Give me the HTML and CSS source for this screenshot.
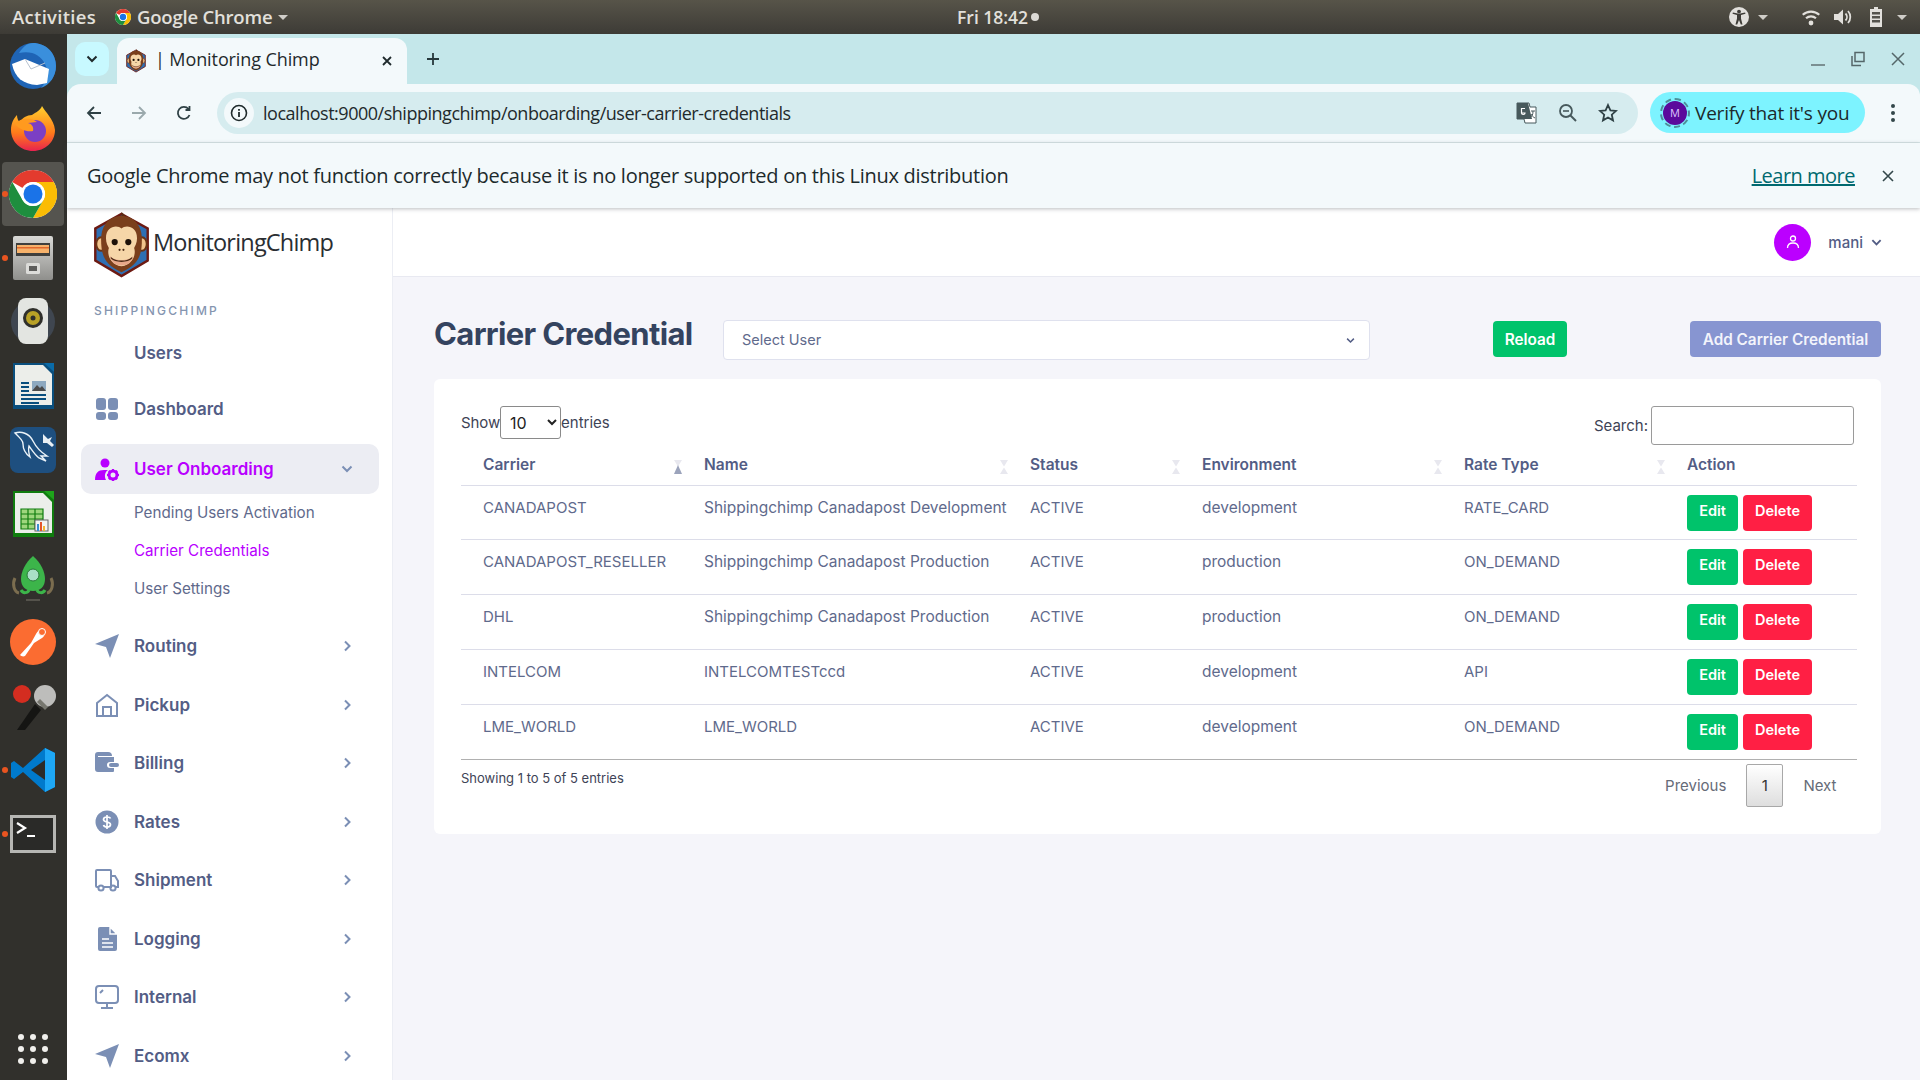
FILE: index.html
```html
<!DOCTYPE html>
<html lang="en">
<head>
<meta charset="utf-8">
<title>| Monitoring Chimp</title>
<link rel="stylesheet" href="styles.css">
</head>
<body>
<svg class="defs" width="0" height="0" aria-hidden="true">
  <defs>
    <symbol id="chrome" viewBox="0 0 48 48">
      <circle cx="24" cy="24" r="24" fill="#fff"/>
      <path d="M24 0a24 24 0 0 1 20.8 12H24a12 12 0 0 0-10.4 6L3.2 12A24 24 0 0 1 24 0z" fill="#e33b2e"/>
      <path d="M44.8 12A24 24 0 0 1 24 48l10.4-18A12 12 0 0 0 24 12z" fill="#fbbc04"/>
      <path d="M3.2 12l10.4 18A12 12 0 0 0 34.4 30L24 48A24 24 0 0 1 3.2 12z" fill="#1e8e3e"/>
      <circle cx="24" cy="24" r="12" fill="#fff"/>
      <circle cx="24" cy="24" r="9.5" fill="#1a73e8"/>
    </symbol>
    <symbol id="monkey" viewBox="0 0 58 68">
      <path d="M29 2 56 17V50L29 66 2 50V17z" fill="#2e6fb3" stroke="#6d1a12" stroke-width="2.5"/>
      <path d="M29 0c1 1 3 2 4 5l-4 2z" fill="#5a2c14"/>
      <ellipse cx="8" cy="33" rx="5" ry="7" fill="#f1c48c" stroke="#6a3415" stroke-width="2"/>
      <ellipse cx="50" cy="33" rx="5" ry="7" fill="#f1c48c" stroke="#6a3415" stroke-width="2"/>
      <path d="M29 4C16 4 8 14 8 28c0 14 2 26 21 34 19-8 21-20 21-34C50 14 42 4 29 4z" fill="#7a3f1c"/>
      <path d="M29 17c-4-4-16-3-16 10 0 5 2 8 3 10-2 5 0 17 13 19 13-2 15-14 13-19 1-2 3-5 3-10 0-13-12-14-16-10z" fill="#f6d6a8"/>
      <circle cx="22" cy="31" r="3.2" fill="#1c1008"/>
      <circle cx="36" cy="31" r="3.2" fill="#1c1008"/>
      <circle cx="27" cy="39" r="1.1" fill="#4a2a14"/>
      <circle cx="31" cy="39" r="1.1" fill="#4a2a14"/>
      <path d="M17 45c4 6 20 6 24 0-1 7-6 10-12 10s-11-3-12-10z" fill="#e8a88a"/>
      <path d="M18 47c5 5 17 5 22 0" fill="none" stroke="#4a2a14" stroke-width="1.4"/>
    </symbol>
    <symbol id="plane" viewBox="0 0 24 24"><path d="M24 0 15 24l-4-11L0 10z" fill="currentColor"/></symbol>
    <symbol id="chev-r" viewBox="0 0 12 12"><path d="M4 1.500 8.500 6 4 10.500" fill="none" stroke="currentColor" stroke-width="2"/></symbol>
    <symbol id="chev-d" viewBox="0 0 12 12"><path d="M1.500 3.500 6 8l4.500-4.500" fill="none" stroke="currentColor" stroke-width="2"/></symbol>
    <symbol id="sort" viewBox="0 0 8 14"><path d="M0 0h8L4 6.500z" fill="#e8e8ef"/><path d="M0 14h8L4 7.500z" fill="#e8e8ef"/></symbol>
    <symbol id="sort-asc" viewBox="0 0 8 14"><path d="M0 0h8L4 6.500z" fill="#e8e8ef"/><path d="M0 14h8L4 5z" fill="#9ba3bb"/></symbol>
  </defs>
</svg>

<div class="screen">
  <header class="gnome-bar">
    <span class="gnome-text gnome-activities">Activities</span>
    <span class="gnome-app">
      <svg class="gnome-chrome"><use href="#chrome"/></svg>
      <span class="gnome-text">Google Chrome</span>
      <span class="caret"></span>
    </span>
    <span class="gnome-clock">Fri 18:42 <i class="clock-dot"></i></span>
    <span class="gnome-tray">
      <svg class="tray-a11y" viewBox="0 0 20 20"><circle cx="10" cy="10" r="10" fill="#e2e0dc"/><circle cx="10" cy="4.600" r="1.900" fill="#3e3c37"/><path d="M3.500 6.800 8 8v3.500L6.500 17.500h1.700L10 13l1.800 4.500h1.700L12 11.500V8l4.500-1.200-.4-1.300L10 6.800 3.900 5.500z" fill="#3e3c37"/></svg>
      <span class="caret caret-a11y"></span>
      <svg class="tray-wifi" viewBox="0 0 20 20"><path d="M1 7a13 13 0 0 1 18 0l-1.500 1.600a11 11 0 0 0-15 0zM4.300 10.500a8.500 8.500 0 0 1 11.400 0l-1.500 1.600a6.300 6.300 0 0 0-8.400 0z" fill="#e2e0dc"/><circle cx="10" cy="16" r="2.400" fill="#e2e0dc"/></svg>
      <svg class="tray-vol" viewBox="0 0 20 20"><path d="M1 7h4l5-4.500v15L5 13H1z" fill="#e2e0dc"/><path d="M12.500 6.500a5 5 0 0 1 0 7M15 4a9 9 0 0 1 0 12" fill="none" stroke="#e2e0dc" stroke-width="1.800"/></svg>
      <svg class="tray-bat" viewBox="0 0 14 20"><path d="M5 0h4v2h4v18H1V2h4z" fill="#e2e0dc"/><path d="M3 5h8v2.500H3zM3 9h8v2.500H3zM3 13h8v2.500H3z" fill="#55534d"/></svg>
      <span class="caret caret-bat"></span>
    </span>
  </header>

  <aside class="dock">
    <div class="dock-item">
      <svg class="dock-icon" viewBox="0 0 48 48"><circle cx="24" cy="24" r="23" fill="#1f64b5"/><path d="M24 1c12 0 23 9 23 23 0 10-6 19-15 22 6-6 8-16 4-24C32 13 22 8 10 11 14 5 18 1 24 1z" fill="#3a8fdc"/><path d="M3 22 16 17l24 10-2 14-10 2C14 42 6 36 3 22z" fill="#fff"/><path d="M16 17l6 10 14-6" fill="none" stroke="#b7c2cf" stroke-width="1"/></svg>
    </div>
    <div class="dock-item">
      <svg class="dock-icon" viewBox="0 0 48 48"><defs><linearGradient id="ff" x1="0" y1="0" x2="0" y2="1"><stop offset="0" stop-color="#ffd02e"/><stop offset=".6" stop-color="#ff7a1a"/><stop offset="1" stop-color="#e8224f"/></linearGradient></defs><path d="M33 0c3 6 12 13 13 24 0 12-10 21-22 21S2 36 2 24c0-7 3-12 6-15 0 3 1 6 3 7 2-4 7-7 12-7 4-3 8-4 10-9z" fill="url(#ff)"/><circle cx="26" cy="25" r="11" fill="#7b3fc4"/><path d="M6 18c5-6 16-7 22-2l-9 1c4 1 6 4 5 8-6 1-13-1-18-7z" fill="#ff9a1f"/></svg>
    </div>
    <div class="dock-item dock-active">
      <i class="run-dot"></i>
      <svg class="dock-icon"><use href="#chrome"/></svg>
    </div>
    <div class="dock-item">
      <i class="run-dot"></i>
      <svg class="dock-icon" viewBox="0 0 48 48"><defs><linearGradient id="cab" x1="0" y1="0" x2="0" y2="1"><stop offset="0" stop-color="#d9d9d6"/><stop offset="1" stop-color="#8f8f8c"/></linearGradient></defs><rect x="4" y="2" width="40" height="44" rx="2" fill="url(#cab)"/><rect x="7" y="9" width="34" height="13" fill="#3f3f3d"/><rect x="8" y="11" width="32" height="8" fill="#f6b26b"/><path d="M8 13h32v1.500H8z" fill="#e2692c"/><rect x="17" y="29" width="14" height="11" rx="1.500" fill="#dcdcd9"/><rect x="20" y="32" width="8" height="5" fill="#5d5d5b"/></svg>
    </div>
    <div class="dock-item">
      <svg class="dock-icon" viewBox="0 0 48 48"><circle cx="24" cy="24" r="22" fill="#3f4650"/><rect x="9" y="0" width="30" height="46" rx="8" fill="#e3e5e1"/><circle cx="24" cy="20" r="10" fill="#2f2f2b"/><circle cx="24" cy="20" r="7" fill="#b8a126"/><circle cx="24" cy="20" r="2.500" fill="#2f2f2b"/></svg>
    </div>
    <div class="dock-item">
      <svg class="dock-icon" viewBox="0 0 48 48"><path d="M4 1h32l9 9v37H4z" fill="#0a4f7e"/><path d="M6 3h28l9 9v31H6z" fill="#eceeea"/><path d="M35 1l10 9V1z" fill="#0a6ba8"/><path d="M12 20h8v2h-8zM12 24h8v2h-8zM12 28h8v2h-8zM12 32h25v2H12zM12 36h25v2H12zM12 40h18v2H12z" fill="#0a4f7e"/><rect x="23" y="19" width="14" height="10" fill="#8da9c0"/><path d="M23 29l5-6 3 3 2-2 4 5z" fill="#4b4b4b"/></svg>
    </div>
    <div class="dock-item">
      <svg class="dock-icon" viewBox="0 0 48 48"><rect x="1" y="1" width="46" height="46" rx="8" fill="#1e4f7f"/><path d="M6 7c6-2 14 0 18 8 3 6 6 10 14 15l-6 0 5 5-7-3c-4-3-7-8-10-12-1 4 0 8 1 11-4-3-7-8-7-13 0-3-2-5-8-11z" fill="none" stroke="#eaf2f8" stroke-width="1.400"/><path d="M34 8l5 5 4-2-2 4 4 4-2 2-5-4-4 0z" fill="#e9eff4"/></svg>
    </div>
    <div class="dock-item">
      <svg class="dock-icon" viewBox="0 0 48 48"><path d="M4 1h32l9 9v37H4z" fill="#107c0e"/><path d="M6 3h28l9 9v31H6z" fill="#eceeea"/><path d="M35 1l10 9V1z" fill="#1ea51b"/><path d="M12 19h22v20H12z" fill="#9ed67d"/><path d="M12 19h22v20H12zM12 24h22M12 29h22M12 34h22M19 19v20M26 19v20" fill="none" stroke="#107c0e" stroke-width="1.200"/><rect x="26" y="30" width="13" height="11" fill="#f4f4f2" stroke="#666"/><path d="M28 34h2v7h-2z" fill="#3b8ed0"/><path d="M31 32h2v9h-2z" fill="#e2552a"/><path d="M34 36h2v5h-2z" fill="#f2b632"/></svg>
    </div>
    <div class="dock-item">
      <svg class="dock-icon" viewBox="0 0 48 48"><path d="M6 24c-3 6-1 14 4 15M42 24c3 6 1 14-4 15" fill="none" stroke="#7b6d4f" stroke-width="3"/><path d="M24 2c8 7 12 16 12 23 0 8-5 12-12 12S12 33 12 25c0-7 4-16 12-23z" fill="#3cb54a"/><circle cx="24" cy="21" r="6" fill="#a9e0c6" stroke="#2a7a3a"/><path d="M12 36c2 4 7 3 8 0M36 36c-2 4-7 3-8 0" fill="none" stroke="#3cb54a" stroke-width="3"/><path d="M17 46h14" stroke="#55534c" stroke-width="2"/></svg>
    </div>
    <div class="dock-item">
      <svg class="dock-icon" viewBox="0 0 48 48"><circle cx="24" cy="24" r="23" fill="#fb6c31"/><path d="M11 37 22 25l5-9c2-4 6-6 8-4s1 6-2 8l-8 5-9 13c-2 1-4 0-5-1z" fill="#fff"/><circle cx="33" cy="14" r="3.500" fill="#fb6c31" stroke="#fff"/></svg>
    </div>
    <div class="dock-item">
      <svg class="dock-icon" viewBox="0 0 48 48"><path d="M26 22 8 48h8l16-20z" fill="#151513"/><circle cx="36" cy="14" r="11" fill="#bdbdbb"/><path d="M28 20l8 8 3-3-8-8z" fill="#77776f"/><circle cx="13" cy="12" r="9" fill="#d42d20"/></svg>
    </div>
    <div class="dock-item">
      <i class="run-dot"></i>
      <svg class="dock-icon" viewBox="0 0 48 48"><path d="M36 2 46 7v34L36 46 14 26 5 33 2 31V17l3-2 9 7z" fill="#007acc"/><path d="M36 2 46 7v34L36 46z" fill="#1ea7f5"/><path d="M36 14v20L22 24z" fill="#2c2b27"/></svg>
    </div>
    <div class="dock-item">
      <i class="run-dot"></i>
      <svg class="dock-icon" viewBox="0 0 48 48"><rect x="1" y="5" width="46" height="38" fill="#b6b6b3"/><rect x="4" y="8" width="40" height="32" fill="#2a2a28"/><path d="M8 13l8 5-8 5" fill="none" stroke="#fff" stroke-width="2.200"/><path d="M18 25h8v2h-8z" fill="#fff"/></svg>
    </div>
    <div class="dock-grid">
      <i></i><i></i><i></i><i></i><i></i><i></i><i></i><i></i><i></i>
    </div>
  </aside>

  <div class="browser">
    <div class="tabstrip">
      <span class="tab-search">
        <svg class="ico12"><use href="#chev-d"/></svg>
      </span>
      <div class="tab">
        <svg class="tab-fav"><use href="#monkey"/></svg>
        <span class="tab-title">| Monitoring Chimp</span>
        <svg class="tab-close" viewBox="0 0 12 12"><path d="M2 2l8 8M10 2l-8 8" stroke="#1f2a2c" stroke-width="1.800"/></svg>
      </div>
      <svg class="tab-new" viewBox="0 0 14 14"><path d="M7 1v12M1 7h12" stroke="#27393c" stroke-width="1.800"/></svg>
      <span class="win-controls">
        <svg class="win-ico" viewBox="0 0 16 16"><path d="M1 14h14" stroke="#6a7a7c" stroke-width="1.600"/></svg>
        <svg class="win-ico" viewBox="0 0 16 16"><path d="M5 1.500h9v9H5zM2 5v9.500h9" fill="none" stroke="#55676a" stroke-width="1.500"/></svg>
        <svg class="win-ico" viewBox="0 0 16 16"><path d="M2 2l12 12M14 2 2 14" stroke="#55676a" stroke-width="1.500"/></svg>
      </span>
    </div>

    <div class="toolbar">
      <svg class="nav-ico" viewBox="0 0 18 18"><path d="M16 9H3M9 3 3 9l6 6" fill="none" stroke="#2f4145" stroke-width="1.800"/></svg>
      <svg class="nav-ico" viewBox="0 0 18 18"><path d="M2 9h13M9 3l6 6-6 6" fill="none" stroke="#9aa9ac" stroke-width="1.800"/></svg>
      <svg class="nav-ico" viewBox="0 0 18 18"><path d="M14.500 11a6 6 0 1 1-1-6M14.500 2v4h-4" fill="none" stroke="#2f4145" stroke-width="1.800"/></svg>
      <div class="omnibox">
        <span class="omni-info">
          <svg class="omni-i" viewBox="0 0 18 18"><circle cx="9" cy="9" r="7.500" fill="none" stroke="#1f2a2c" stroke-width="1.600"/><path d="M9 8v5M9 5v1.800" stroke="#1f2a2c" stroke-width="1.800"/></svg>
        </span>
        <span class="omni-url">localhost:9000/shippingchimp/onboarding/user-carrier-credentials</span>
        <svg class="omni-translate" viewBox="0 0 22 22"><path d="M1 1h12l1 4h6v16H9l-1-4H1z" fill="#fff" stroke="#47595c" stroke-width="1"/><path d="M1 1h11l4 16H1z" fill="#47595c"/><path d="M9 6.500H5.500v4.500H9c0 2-3.500 2-3.500 0" fill="none" stroke="#fff" stroke-width="1.200"/><path d="M15 9h4M17 9c0 4-1 5-3 7M15 12c1 2 2 3 4 4" fill="none" stroke="#47595c" stroke-width="1"/></svg>
        <svg class="omni-ico" viewBox="0 0 20 20"><circle cx="8" cy="8" r="6" fill="none" stroke="#47595c" stroke-width="1.800"/><path d="M5 8h6" stroke="#47595c" stroke-width="1.600"/><path d="M12.500 12.500 18 18" stroke="#47595c" stroke-width="2"/></svg>
        <svg class="omni-ico" viewBox="0 0 20 20"><path d="M10 2l2.400 5.300 5.600.6-4.200 3.800 1.200 5.700-5-2.900-5 2.900 1.200-5.700L2 7.900l5.600-.6z" fill="none" stroke="#2f4145" stroke-width="1.800"/></svg>
      </div>
      <div class="verify">
        <span class="verify-avatar"><span class="verify-m">M</span></span>
        <span class="verify-text">Verify that it's you</span>
      </div>
      <svg class="menu-dots" viewBox="0 0 6 20"><circle cx="3" cy="3" r="2" fill="#33474a"/><circle cx="3" cy="10" r="2" fill="#33474a"/><circle cx="3" cy="17" r="2" fill="#33474a"/></svg>
    </div>

    <div class="infobar">
      <span class="info-msg">Google Chrome may not function correctly because it is no longer supported on this Linux distribution</span>
      <a class="info-link">Learn more</a>
      <svg class="info-close" viewBox="0 0 14 14"><path d="M2 2l10 10M12 2 2 12" stroke="#33474a" stroke-width="1.600"/></svg>
    </div>

    <div class="app">
      <nav class="sidebar">
        <div class="brand">
          <svg class="brand-logo"><use href="#monkey"/></svg>
          <span class="brand-name">MonitoringChimp</span>
        </div>
        <div class="nav-label">SHIPPINGCHIMP</div>
        <div class="nav-item nav-users"><span class="nav-icon"></span><span class="nav-text">Users</span></div>
        <div class="nav-item nav-dash">
          <span class="nav-icon"><svg class="ico24" viewBox="0 0 24 24"><rect x="1" y="1" width="10" height="12" rx="3" fill="currentColor"/><rect x="13" y="1" width="10" height="12" rx="3" fill="currentColor"/><rect x="1" y="15" width="10" height="8" rx="3" fill="currentColor"/><rect x="13" y="15" width="10" height="8" rx="3" fill="currentColor"/></svg></span>
          <span class="nav-text">Dashboard</span>
        </div>
        <div class="nav-item nav-open">
          <span class="nav-icon"><svg class="ico24" viewBox="0 0 24 24"><circle cx="10" cy="6" r="4.500" fill="currentColor"/><path d="M0 23c0-7 3-10 9-10h4c-3 2-4 6-2 10z" fill="currentColor"/><circle cx="18" cy="18" r="4" fill="none" stroke="currentColor" stroke-width="3"/><path d="M18 12v2.500M18 21.500V24M12 18h2.500M21.500 18H24M13.800 13.800l1.700 1.700M20.500 20.500l1.700 1.700M13.800 22.200l1.700-1.700M20.500 15.500l1.700-1.700" stroke="currentColor" stroke-width="2"/></svg></span>
          <span class="nav-text">User Onboarding</span>
          <svg class="nav-chev"><use href="#chev-d"/></svg>
        </div>
        <div class="subnav">
          <div class="sub-item">Pending Users Activation</div>
          <div class="sub-item sub-active">Carrier Credentials</div>
          <div class="sub-item">User Settings</div>
        </div>
        <div class="nav-item">
          <span class="nav-icon"><svg class="ico24"><use href="#plane"/></svg></span>
          <span class="nav-text">Routing</span>
          <svg class="nav-chev"><use href="#chev-r"/></svg>
        </div>
        <div class="nav-item">
          <span class="nav-icon"><svg class="ico24" viewBox="0 0 24 24"><path d="M2 10 12 2l10 8v13H2z" fill="none" stroke="currentColor" stroke-width="2"/><path d="M8 23V14h8v9" fill="none" stroke="currentColor" stroke-width="2"/></svg></span>
          <span class="nav-text">Pickup</span>
          <svg class="nav-chev"><use href="#chev-r"/></svg>
        </div>
        <div class="nav-item">
          <span class="nav-icon"><svg class="ico24" viewBox="0 0 24 24"><path d="M0 4a3 3 0 0 1 3-3h10a4 4 0 0 1 4 4H3v1h16v5h-4a3 3 0 0 0 0 6h4v3a1 1 0 0 1-1 1H3a3 3 0 0 1-3-3z" fill="currentColor"/><rect x="14" y="12" width="10" height="4" rx="2" fill="currentColor"/></svg></span>
          <span class="nav-text">Billing</span>
          <svg class="nav-chev"><use href="#chev-r"/></svg>
        </div>
        <div class="nav-item">
          <span class="nav-icon"><svg class="ico24" viewBox="0 0 24 24"><circle cx="12" cy="12" r="11.500" fill="currentColor"/><path d="M15.500 8.500C15 7 13.500 7 12 7c-2 0-3.500 1-3.500 2.500 0 3.500 7 1.500 7 5 0 1.500-1.500 2.500-3.500 2.500-1.500 0-3-.5-3.500-2M12 5v14" fill="none" stroke="#fff" stroke-width="1.700"/></svg></span>
          <span class="nav-text">Rates</span>
          <svg class="nav-chev"><use href="#chev-r"/></svg>
        </div>
        <div class="nav-item">
          <span class="nav-icon"><svg class="ico24" viewBox="0 0 24 24"><path d="M3 19H2a1 1 0 0 1-1-1V3a1 1 0 0 1 1-1h13a1 1 0 0 1 1 1v16H9M16 8h4l3 5v6h-3" fill="none" stroke="currentColor" stroke-width="2"/><circle cx="6" cy="20" r="2.600" fill="none" stroke="currentColor" stroke-width="2"/><circle cx="18" cy="20" r="2.600" fill="none" stroke="currentColor" stroke-width="2"/></svg></span>
          <span class="nav-text">Shipment</span>
          <svg class="nav-chev"><use href="#chev-r"/></svg>
        </div>
        <div class="nav-item">
          <span class="nav-icon"><svg class="ico24" viewBox="0 0 24 24"><path d="M5 0h10l7 7v15a2 2 0 0 1-2 2H5a2 2 0 0 1-2-2V2a2 2 0 0 1 2-2z" fill="currentColor"/><path d="M15 0v7h7zM7 12h7M7 16h11M7 20h11" fill="none" stroke="#fff" stroke-width="1.400"/></svg></span>
          <span class="nav-text">Logging</span>
          <svg class="nav-chev"><use href="#chev-r"/></svg>
        </div>
        <div class="nav-item">
          <span class="nav-icon"><svg class="ico24" viewBox="0 0 24 24"><rect x="1" y="1" width="22" height="17" rx="3" fill="none" stroke="currentColor" stroke-width="2"/><path d="M12 18v5M6 23h12M5 8l3-3" fill="none" stroke="currentColor" stroke-width="2"/></svg></span>
          <span class="nav-text">Internal</span>
          <svg class="nav-chev"><use href="#chev-r"/></svg>
        </div>
        <div class="nav-item">
          <span class="nav-icon"><svg class="ico24"><use href="#plane"/></svg></span>
          <span class="nav-text">Ecomx</span>
          <svg class="nav-chev"><use href="#chev-r"/></svg>
        </div>
      </nav>

      <div class="page">
        <div class="page-head">
          <span class="avatar">
            <svg class="avatar-ico" viewBox="0 0 14 14"><circle cx="7" cy="3.500" r="2.500" fill="none" stroke="#fff" stroke-width="1.300"/><path d="M1.500 13c0-3 2-5 5.500-5s5.500 2 5.500 5" fill="none" stroke="#fff" stroke-width="1.300"/></svg>
          </span>
          <span class="user-name">mani</span>
          <svg class="user-chev"><use href="#chev-d"/></svg>
        </div>

        <main class="content">
          <div class="title-row">
            <h1 class="title">Carrier Credential</h1>
            <div class="user-select">
              <span class="user-select-text">Select User</span>
              <svg class="select-chev"><use href="#chev-d"/></svg>
            </div>
            <button class="btn btn-reload">Reload</button>
            <button class="btn btn-add">Add Carrier Credential</button>
          </div>

          <section class="card">
            <div class="dt-top">
              <label class="dt-length"><span class="dt-show">Show</span><select class="dt-select"><option>10</option></select>entries</label>
              <label class="dt-search">Search:<input class="dt-input" type="text"></label>
            </div>
            <table class="dt">
              <colgroup>
                <col class="c1"><col class="c2"><col class="c3"><col class="c4"><col class="c5"><col class="c6">
              </colgroup>
              <thead>
                <tr>
                  <th>Carrier<svg class="sort-ico"><use href="#sort-asc"/></svg></th>
                  <th>Name<svg class="sort-ico"><use href="#sort"/></svg></th>
                  <th>Status<svg class="sort-ico"><use href="#sort"/></svg></th>
                  <th>Environment<svg class="sort-ico"><use href="#sort"/></svg></th>
                  <th>Rate Type<svg class="sort-ico"><use href="#sort"/></svg></th>
                  <th>Action</th>
                </tr>
              </thead>
              <tbody>
                <tr>
                  <td>CANADAPOST</td><td class="lc">Shippingchimp Canadapost Development</td><td>ACTIVE</td><td class="lc">development</td><td>RATE_CARD</td>
                  <td class="td-act"><button class="btn btn-edit">Edit</button><button class="btn btn-del">Delete</button></td>
                </tr>
                <tr>
                  <td>CANADAPOST_RESELLER</td><td class="lc">Shippingchimp Canadapost Production</td><td>ACTIVE</td><td class="lc">production</td><td>ON_DEMAND</td>
                  <td class="td-act"><button class="btn btn-edit">Edit</button><button class="btn btn-del">Delete</button></td>
                </tr>
                <tr>
                  <td>DHL</td><td class="lc">Shippingchimp Canadapost Production</td><td>ACTIVE</td><td class="lc">production</td><td>ON_DEMAND</td>
                  <td class="td-act"><button class="btn btn-edit">Edit</button><button class="btn btn-del">Delete</button></td>
                </tr>
                <tr>
                  <td>INTELCOM</td><td>INTELCOMTESTccd</td><td>ACTIVE</td><td class="lc">development</td><td>API</td>
                  <td class="td-act"><button class="btn btn-edit">Edit</button><button class="btn btn-del">Delete</button></td>
                </tr>
                <tr>
                  <td>LME_WORLD</td><td>LME_WORLD</td><td>ACTIVE</td><td class="lc">development</td><td>ON_DEMAND</td>
                  <td class="td-act"><button class="btn btn-edit">Edit</button><button class="btn btn-del">Delete</button></td>
                </tr>
              </tbody>
            </table>
            <div class="dt-bottom">
              <span class="dt-info">Showing 1 to 5 of 5 entries</span>
              <div class="pager">
                <span class="pager-link">Previous</span>
                <span class="pager-cur">1</span>
                <span class="pager-link">Next</span>
              </div>
            </div>
          </section>
        </main>
      </div>
    </div>
  </div>
</div>
</body>
</html>
```

FILE: styles.css
```css
* { box-sizing: border-box; }
html, body { margin: 0; height: 100%; overflow: hidden; }
body { font-family: "Inter", "Noto Sans", sans-serif; background: #2f2e2a; }
.defs { position: absolute; }

.screen {
  height: 1080px;
  display: grid;
  grid-template-columns: 67px 1fr;
  grid-template-rows: 34px 1fr;
}

/* GNOME bar */
.gnome-bar {
  grid-column: 1 / -1;
  display: flex;
  align-items: center;
  padding-left: 12px;
  background: linear-gradient(#575449, #3d3b36);
  color: #e2e0db;
}
.gnome-text { font: 600 18.500px/34px "Open Sans", sans-serif; letter-spacing: -.2px; }
.gnome-activities { width: 103px; letter-spacing: .3px; }
.gnome-app { display: flex; align-items: center; }
.gnome-chrome { width: 16px; height: 16px; margin-right: 6px; }
.caret { width: 0; height: 0; border: 5px solid transparent; border-top: 5px solid #cfcdc8; border-bottom: 0; margin-left: 6px; }
.gnome-clock { position: absolute; left: 957px; font: 600 17.500px/34px "Open Sans", sans-serif; display: flex; align-items: center; gap: 3px; }
.clock-dot { width: 8px; height: 8px; border-radius: 50%; background: #dcdad5; }
.gnome-tray { margin-left: auto; display: flex; align-items: center; padding-right: 13px; }
.tray-a11y { width: 20px; height: 20px; }
.caret-a11y { margin-left: 9px; }
.tray-wifi { width: 20px; height: 20px; margin-left: 33px; }
.tray-vol { width: 20px; height: 20px; margin-left: 12px; }
.tray-bat { width: 16px; height: 20px; margin-left: 15px; }
.caret-bat { margin-left: 13px; }

/* Dock */
.dock { background: #31302c; display: flex; flex-direction: column; overflow: hidden; }
.dock-item { height: 64px; display: flex; align-items: center; justify-content: center; position: relative; flex: none; padding-right: 1px; }
.dock-icon { width: 48px; height: 48px; }
.dock-active::before { content: ""; position: absolute; left: 2px; right: 3px; top: 0; bottom: 0; background: #55544f; border-radius: 4px; }
.dock-active .dock-icon { position: relative; }
.run-dot { position: absolute; left: 2px; top: 29px; width: 6px; height: 6px; border-radius: 50%; background: #e95420; z-index: 1; }
.dock-grid {
  margin: auto 0 16px 18px;
  display: grid;
  grid-template-columns: repeat(3, 6px);
  gap: 6px;
}
.dock-grid i { width: 6px; height: 6px; border-radius: 50%; background: #f0efec; }

/* Browser */
.browser { display: flex; flex-direction: column; min-width: 0; height: 1046px; background: #c4e7ea; }
.tabstrip { height: 50px; display: flex; align-items: flex-start; flex: none; padding-left: 8px; }
.tab-search { width: 34px; height: 34px; margin-top: 8px; background: #c8f9ff; border-radius: 10px; display: flex; align-items: center; justify-content: center; color: #1f2a2c; }
.ico12 { width: 12px; height: 12px; }
.tab {
  width: 290px;
  height: 46px;
  margin: 4px 0 0 8px;
  padding: 0 14px 0 9px;
  background: #f3f9fb;
  border-radius: 12px 12px 0 0;
  display: flex;
  align-items: center;
}
.tab-fav { width: 20px; height: 24px; }
.tab-title { margin: 0 0 5px 9px; font: 400 18px "Open Sans", sans-serif; color: #1f2a2c; letter-spacing: -.1px; flex: 1; white-space: nowrap; }
.tab-close { width: 12px; height: 12px; }
.tab-new { width: 14px; height: 14px; margin: 18px 0 0 19px; }
.win-controls { margin-left: auto; display: flex; gap: 24px; padding: 17px 14px 0 0; }
.win-ico { width: 16px; height: 16px; }

.toolbar {
  height: 59px;
  flex: none;
  background: #f3f9fb;
  border-top-left-radius: 14px;
  border-top-right-radius: 12px;
  border-bottom: 1px solid #d8e6e8;
  display: flex;
  align-items: center;
  padding-left: 18px;
}
.nav-ico { width: 18px; height: 18px; margin-right: 27px; }
.nav-ico:nth-child(3) { margin-right: 24px; }
.omnibox {
  width: 1421px;
  height: 42px;
  margin-top: -1px;
  background: #d6ecef;
  border-radius: 21px;
  display: flex;
  align-items: center;
  padding: 0 15px 0 7px;
}
.omni-info { width: 30px; height: 30px; border-radius: 50%; background: #f3f9fb; display: flex; align-items: center; justify-content: center; }
.omni-i { width: 18px; height: 18px; }
.omni-url { margin-left: 9px; font: 400 18px "Open Sans", sans-serif; color: #1f2a2c; flex: 1; white-space: nowrap; letter-spacing: -.48px; }
.omni-translate { width: 22px; height: 22px; margin-right: 20px; }
.omni-ico { width: 20px; height: 20px; margin-right: 20px; }
.omni-ico:last-child { margin-right: 5px; }
.verify {
  width: 215px;
  height: 41px;
  margin: -1px 0 0 12px;
  background: #7df3ff;
  border-radius: 21px;
  display: flex;
  align-items: center;
  padding-left: 13px;
}
.verify-avatar { width: 24px; height: 24px; border-radius: 50%; background: #5b0a9c; outline: 2px dashed #4d8f9a; outline-offset: 1px; display: flex; align-items: center; justify-content: center; }
.verify-m { font: 400 11px "Open Sans", sans-serif; color: #dcc8ff; }
.verify-text { margin-left: 8px; font: 400 19px "Open Sans", sans-serif; color: #1c2a2c; letter-spacing: -.2px; white-space: nowrap; }
.menu-dots { width: 6px; height: 20px; margin-left: 25px; }

.infobar {
  height: 65px;
  flex: none;
  background: #f3f9fb;
  display: flex;
  align-items: center;
  padding-left: 20px;
  position: relative;
  z-index: 2;
  box-shadow: 0 1px 4px rgba(60, 70, 75, .35);
}
.info-msg { font: 400 20px "Open Sans", sans-serif; color: #1c2a2c; letter-spacing: -.28px; white-space: nowrap; }
.info-link { margin-left: auto; font: 400 20px "Open Sans", sans-serif; color: #00696f; text-decoration: underline; letter-spacing: -.5px; white-space: nowrap; }
.info-close { width: 14px; height: 14px; margin: 0 25px 0 26px; }

/* App */
.app { flex: 1; min-height: 0; display: flex; background: #f5f5fa; overflow: hidden; }
.sidebar {
  width: 326px;
  flex: none;
  background: #fff;
  border-right: 1px solid #eceef4;
  padding-top: 3px;
  color: #535d85;
  overflow: hidden;
}
.brand { height: 67px; display: flex; align-items: center; padding-left: 26px; }
.brand-logo { width: 57px; height: 66px; }
.brand-name { margin: 0 0 5px 3px; font: 400 23.500px "Open Sans", sans-serif; color: #2a2e32; letter-spacing: -.8px; }
.nav-label { height: 50px; padding: 16px 0 0 27px; font: 500 12px/34px "Inter", sans-serif; letter-spacing: 2.200px; color: #8595b0; }
.nav-item {
  height: 50px;
  margin: 0 13px 8.500px 14px;
  padding: 0 25px 0 14px;
  display: flex;
  align-items: center;
  font-size: 17px;
  font-weight: 600;
  border-radius: 10px;
}
.nav-users { margin-bottom: 6px; }
.nav-dash { margin-bottom: 10px; }
.nav-icon { width: 25px; height: 24px; color: #7b8fb5; margin-right: 14px; flex: none; }
.ico24 { width: 24px; height: 24px; display: block; }
.nav-text { flex: 1; }
.nav-chev { width: 12px; height: 12px; color: #7b8fb5; flex: none; margin-right: 1px; }
.nav-open { background: #ecedf3; color: #b800ff; margin-bottom: 0; }
.nav-open .nav-icon { color: #b800ff; }
.subnav { margin: -1px 0 14px; }
.sub-item { height: 38px; padding-left: 67px; display: flex; align-items: center; font-size: 15.200px; color: #5f6a8c; }
.sub-active { color: #b800ff; }

.page { flex: 1; min-width: 0; display: flex; flex-direction: column; }
.page-head {
  height: 69px;
  flex: none;
  background: #fff;
  border-bottom: 1px solid #e8e9f1;
  display: flex;
  align-items: center;
  justify-content: flex-end;
  padding-right: 38px;
}
.avatar { width: 37px; height: 37px; border-radius: 50%; background: #bb00ff; display: flex; align-items: center; justify-content: center; }
.avatar-ico { width: 14px; height: 14px; }
.user-name { margin-left: 17px; font-size: 15px; font-weight: 500; color: #535d85; }
.user-chev { width: 11px; height: 11px; margin-left: 8px; color: #535d85; }

.content { padding: 43px 39px 0 41px; }
.title-row { height: 40px; display: flex; align-items: center; margin-bottom: 19px; }
.title { margin: 0; padding-bottom: 13px; width: 258px; font-size: 31px; font-weight: 700; color: #34435f; letter-spacing: -.65px; white-space: nowrap; line-height: 1; }
.user-select {
  width: 647px;
  height: 40px;
  margin-left: 31px;
  background: #fff;
  border: 1px solid #dfe1ee;
  border-radius: 4px;
  display: flex;
  align-items: center;
  justify-content: space-between;
  padding: 0 14px 0 18px;
}
.user-select-text { font-size: 14.500px; color: #5f6a8c; padding-bottom: 1px; }
.select-chev { width: 9px; height: 9px; color: #535d85; }
.btn { border: 0; font-family: inherit; font-weight: 600; color: #fff; border-radius: 4px; padding: 0; }
.btn-reload { width: 74px; height: 36px; margin: -2px 0 0 123px; background: #00c36b; font-size: 15.300px; }
.btn-add { width: 191px; height: 36px; margin: -2px 0 0 auto; background: #8795d1; font-size: 15.300px; color: #f3f4fb; }

.card {
  height: 455px;
  background: #fff;
  border-radius: 6px;
  padding: 27px 24px 0 27px;
}
.dt-top { height: 40px; display: flex; justify-content: space-between; align-items: flex-start; }
.dt-length, .dt-search { display: flex; align-items: center; font-size: 15px; color: #3e4356; }
.dt-length { word-spacing: 0; }
.dt-show { letter-spacing: -.1px; }
.dt-select {
  width: 61px;
  height: 33px;
  padding-left: 5px;
  background: #fff;
  border: 1px solid #8a8a8a;
  border-radius: 3px;
  font: 400 16px "Inter", sans-serif;
  color: #222;
}
.dt-search { padding-right: 3px; gap: 3px; }
.dt-input { width: 203px; height: 39px; border: 1px solid #9a9a9a; border-radius: 3px; background: #fff; }
.dt { width: 1396px; table-layout: fixed; border-collapse: collapse; }
.c1 { width: 221px; } .c2 { width: 326px; } .c3 { width: 172px; } .c4 { width: 262px; } .c5 { width: 223px; } .c6 { width: 192px; }
.dt th {
  height: 39px;
  padding: 0 0 1px 22px;
  position: relative;
  text-align: left;
  vertical-align: middle;
  font-size: 15.500px;
  font-weight: 600;
  color: #535d85;
  border-bottom: 1px solid #dcdde9;
}
.sort-ico { position: absolute; right: 0; top: 14px; width: 8px; height: 14px; }
.dt td {
  height: 54.750px;
  padding: 12px 0 0 22px;
  vertical-align: top;
  font-size: 15px;
  line-height: 20px;
  color: #5f6a8c;
  border-bottom: 1px solid #dcdde9;
  white-space: nowrap;
}
.dt td.lc { font-size: 15.500px; }
.dt tbody tr:last-child td { height: 55.750px; border-bottom-color: #b0b0b0; }
.dt td.td-act { padding-top: 9px; }
.btn-edit { width: 51px; height: 36px; background: #00c36b; font-size: 14.500px; vertical-align: top; padding-bottom: 5px; }
.btn-del { width: 69px; height: 36px; margin-left: 5px; background: #ff1f44; font-size: 14.500px; vertical-align: top; padding-bottom: 5px; }

.dt-bottom { display: flex; justify-content: space-between; align-items: flex-start; padding-top: 4px; }
.dt-info { margin-top: 5px; font-size: 13px; line-height: 18px; color: #3e4356; }
.pager { display: flex; align-items: center; font-size: 15px; color: #666b78; padding-right: 20.500px; }
.pager-cur {
  width: 37px;
  height: 43px;
  margin: 0 20px;
  display: flex;
  align-items: center;
  justify-content: center;
  border: 1px solid #a8a8a8;
  border-radius: 2px;
  background: linear-gradient(#fff, #dedede);
  color: #333;
}
```
